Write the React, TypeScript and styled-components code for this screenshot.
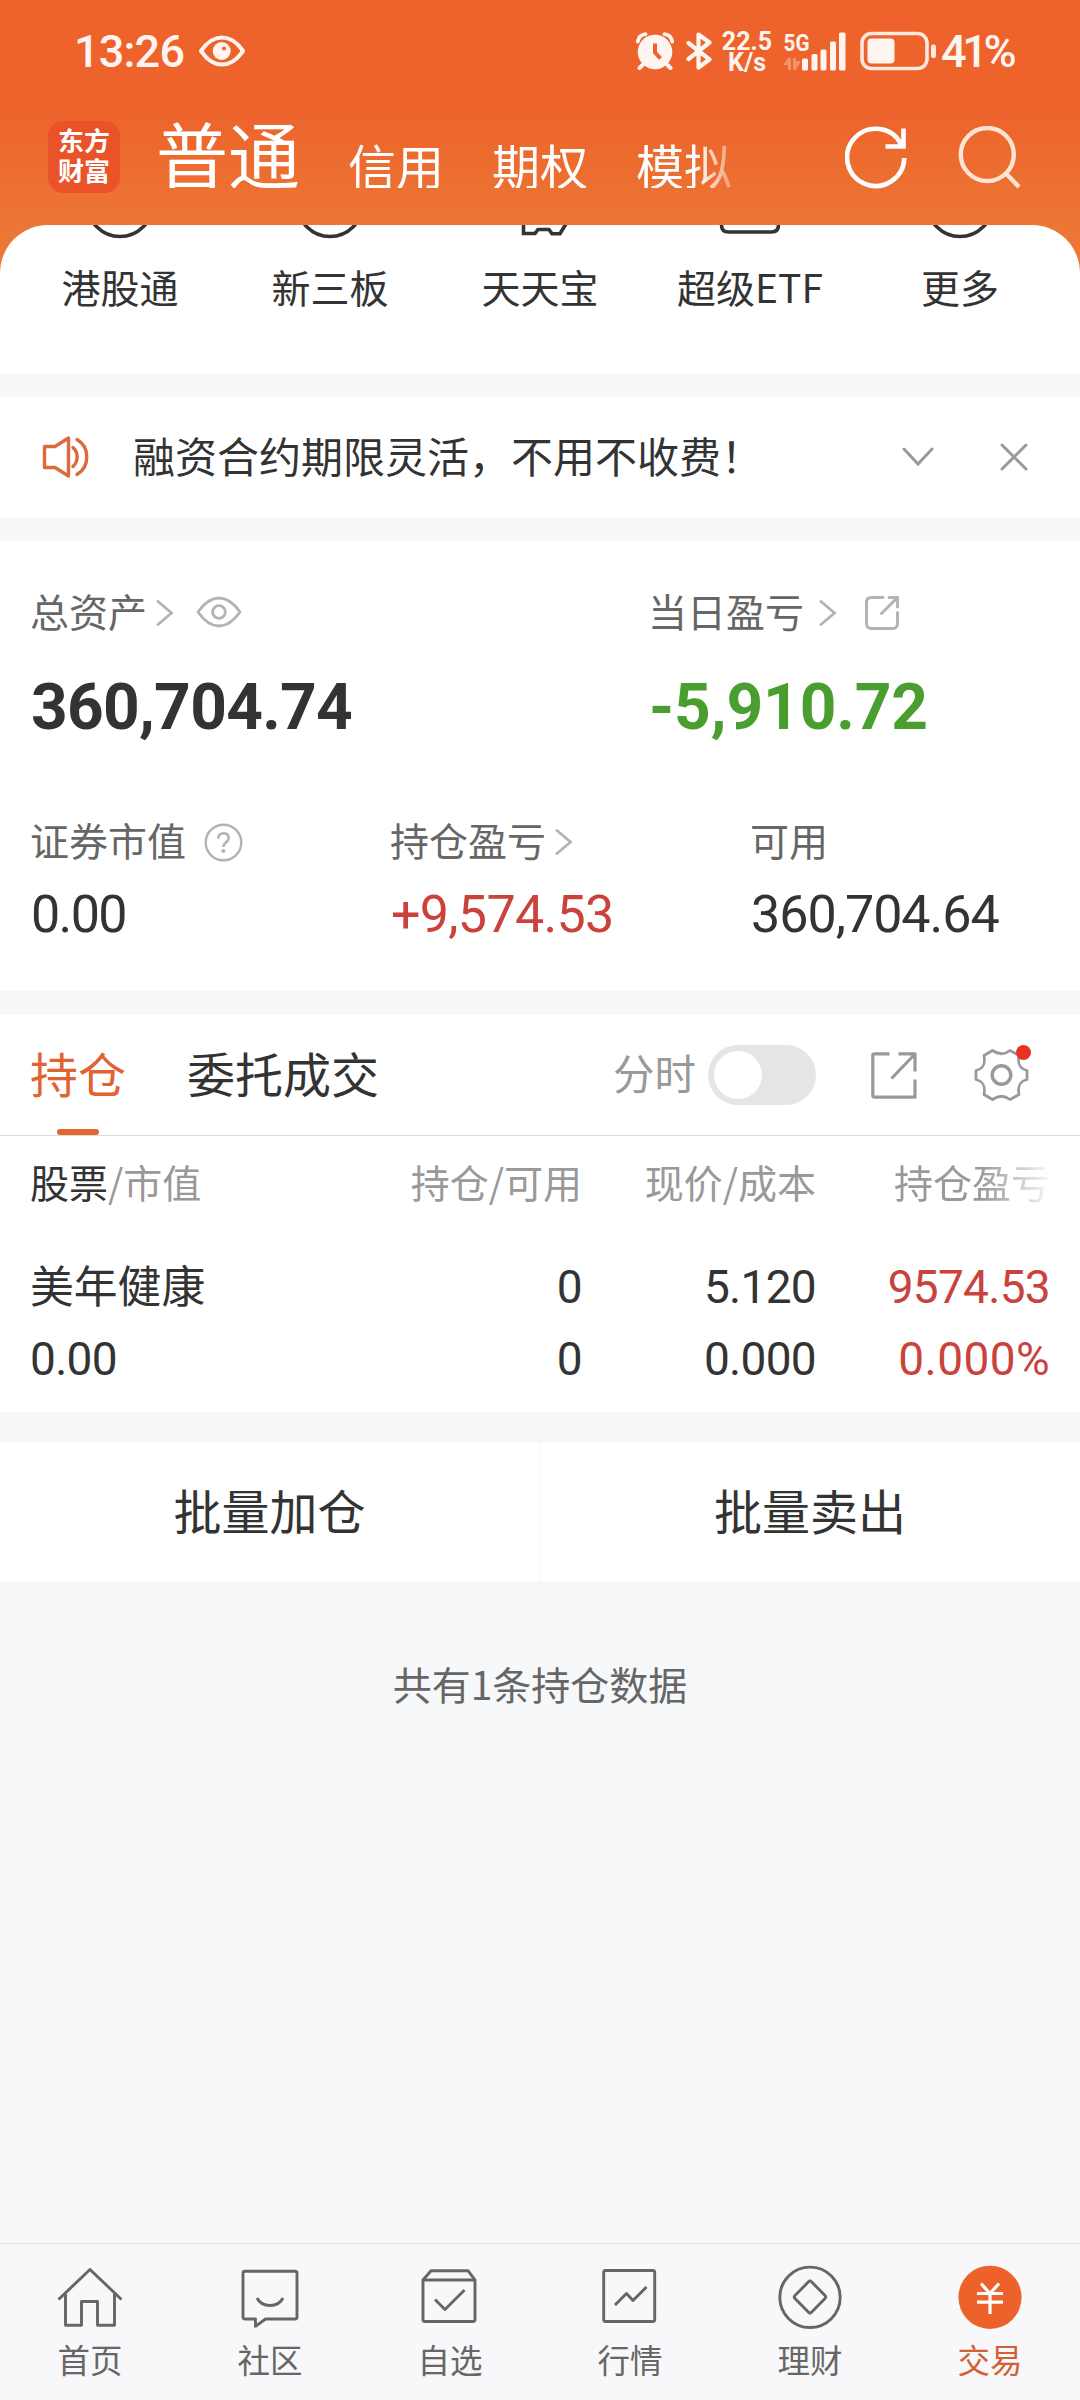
import React from 'react';
import styled, { createGlobalStyle, css } from 'styled-components';

const GlobalStyle = createGlobalStyle`
  * { box-sizing: border-box; }
  html, body { margin: 0; padding: 0; }
  body { width: 1080px; background: #f7f8fa; }
  svg { display: block; flex: none; }
`;

const cjk = css`
  font-family: 'Noto Sans CJK SC', 'Noto Sans', sans-serif;
  line-height: 1;
  padding-bottom: 0.112em;
  white-space: nowrap;
`;

const digits = css`
  font-family: Roboto, 'Noto Sans CJK SC', sans-serif;
  white-space: nowrap;
`;

const Page = styled.div`
  width: 1080px;
  height: 2400px;
  display: flex;
  flex-direction: column;
  background: linear-gradient(#ed632b 0, #ed632b 105px, #ec7635 225px, #ed7a36 290px, #f7f8fa 290px);
  overflow: hidden;
`;

/* ---------- status bar ---------- */

const StatusBar = styled.div`
  height: 105px;
  padding: 0 60px 3px 74px;
  display: flex;
  align-items: center;
  color: #fff5f0;
`;

const Clock = styled.span`
  ${digits}
  width: 125px;
  font-size: 45px;
  font-weight: 500;
  letter-spacing: -0.8px;
`;

const StatusIcons = styled.div`
  width: 384px;
  margin-left: auto;
  display: flex;
  align-items: center;
`;

const Speed = styled.div`
  ${digits}
  width: 52px;
  margin: 0 10px 0 9px;
  padding-top: 3px;
  text-align: center;
  font-size: 25px;
  line-height: 20.5px;
  font-weight: 700;
`;

const BatteryText = styled.span`
  ${digits}
  margin-left: 4px;
  font-size: 45px;
  font-weight: 500;
  letter-spacing: -4.3px;
`;

/* ---------- header ---------- */

const Header = styled.header`
  height: 120px;
  padding: 0 58px 0 48px;
  display: flex;
  align-items: flex-start;
`;

const Logo = styled.div`
  width: 72px;
  height: 72px;
  margin-top: 16px;
  padding: 4px 10px;
  border-radius: 15px;
  background: #ea5328;
  color: #fff;
  font: 700 26px/30px 'Noto Sans CJK SC', sans-serif;
  white-space: nowrap;
`;

const HeaderTabs = styled.nav`
  width: 585px;
  height: 72px;
  margin: 11px 0 0 36px;
  display: flex;
  align-items: flex-end;
  gap: 48px;
  mask-image: linear-gradient(90deg, #000 541px, transparent 592px);
`;

const HeaderTab = styled.span<{ $active?: boolean }>`
  font-family: 'Noto Sans CJK SC', sans-serif;
  font-size: ${(p) => (p.$active ? 72 : 48)}px;
  line-height: 1;
  color: #fff;
  white-space: nowrap;
`;

const HeaderActions = styled.div`
  margin: 21px 0 0 auto;
  display: flex;
  gap: 50px;
`;

/* ---------- sheet ---------- */

const Shortcuts = styled.section`
  height: 148px;
  padding: 0 15px;
  display: grid;
  grid-template-columns: repeat(5, 1fr);
  background: #fff;
  border-radius: 48px 48px 0 0;
`;

const Shortcut = styled.div`
  display: flex;
  flex-direction: column;
  align-items: center;
  gap: 26px;
`;

const ShortcutLabel = styled.span`
  ${cjk}
  font-size: 39px;
  color: #333;
`;

const Gap = styled.div<{ $h: number }>`
  flex: none;
  height: ${(p) => p.$h}px;
  background: #f7f8fa;
`;

const Notice = styled.section`
  height: 120px;
  padding: 0 52px 0 42px;
  display: flex;
  align-items: center;
  background: #fff;
`;

const NoticeText = styled.span`
  ${cjk}
  flex: 1;
  margin-left: 43px;
  font-size: 42px;
  color: #333;
`;

const NoticeActions = styled.div`
  display: flex;
  align-items: center;
  gap: 66px;
`;

/* ---------- assets ---------- */

const Assets = styled.section`
  height: 450px;
  padding-top: 42px;
  background: #fff;
`;

const AssetRow = styled.div<{ $cols: string }>`
  padding-left: 30px;
  display: grid;
  grid-template-columns: ${(p) => p.$cols};
`;

const Metrics = styled(AssetRow)`
  margin-top: 64px;
`;

const LabelRow = styled.div`
  height: 60px;
  display: flex;
  align-items: center;
`;

const Label = styled.span`
  ${cjk}
  font-size: 39px;
  color: #666;
`;

const IconSlot = styled.span<{ $left: number }>`
  margin-left: ${(p) => p.$left}px;
`;

const Total = styled.div<{ $color: string; $spacing: number }>`
  ${digits}
  margin: 25px 0 0 1px;
  height: 80px;
  line-height: 80px;
  font-size: 64px;
  font-weight: 700;
  letter-spacing: ${(p) => p.$spacing}px;
  color: ${(p) => p.$color};
`;

const Metric = styled.div<{ $color: string; $spacing: number }>`
  ${digits}
  margin: 13px 0 0 1px;
  height: 60px;
  line-height: 60px;
  font-size: 52px;
  letter-spacing: ${(p) => p.$spacing}px;
  color: ${(p) => p.$color};
`;

/* ---------- positions ---------- */

const PositionBar = styled.div`
  height: 121px;
  padding: 0 51px 0 30px;
  display: flex;
  align-items: center;
  background: #fff;
  border-bottom: 1px solid #dedede;
`;

const PositionTab = styled.div<{ $active?: boolean }>`
  position: relative;
  height: 120px;
  margin-right: 61px;
  display: flex;
  align-items: center;
  color: ${(p) => (p.$active ? '#e06331' : '#333')};
  ${(p) =>
    p.$active &&
    css`
      &::after {
        content: '';
        position: absolute;
        left: 27px;
        bottom: 0;
        width: 42px;
        height: 6px;
        border-radius: 3px;
        background: #e16632;
      }
    `}
`;

const PositionTabText = styled.span`
  ${cjk}
  font-size: 48px;
`;

const BarTools = styled.div`
  margin-left: auto;
  display: flex;
  align-items: center;
`;

const ToolLabel = styled.span`
  ${cjk}
  font-size: 41.5px;
  color: #999;
`;

const Toggle = styled.span`
  width: 108px;
  height: 60px;
  margin: 0 55px 0 12px;
  padding: 6px;
  border-radius: 30px;
  background: #e5e5e7;
  &::before {
    content: '';
    display: block;
    width: 48px;
    height: 48px;
    border-radius: 50%;
    background: #fff;
  }
`;

const GearWrap = styled.span`
  position: relative;
  margin-left: 57px;
`;

const RedDot = styled.i`
  position: absolute;
  right: -2px;
  top: -3px;
  width: 15px;
  height: 15px;
  border-radius: 50%;
  background: #e83323;
`;

const Grid = styled.div`
  padding: 0 30px;
  display: grid;
  grid-template-columns: 270px 282px 234px 234px;
  background: #fff;
`;

const HeadRow = styled(Grid)`
  height: 96px;
  align-items: center;
`;

const HeadCell = styled.span<{ $fade?: boolean }>`
  ${cjk}
  font-size: 39px;
  color: #999;
  text-align: right;
  &:first-child { text-align: left; }
  b { font-weight: 400; color: #333; }
  ${(p) => p.$fade && 'mask-image: linear-gradient(90deg, #000 165px, transparent 240px);'}
`;

const StockRow = styled(Grid)`
  height: 180px;
  padding-top: 19px;
  align-items: start;
`;

const Cell = styled.div<{ $color?: string }>`
  ${digits}
  font-size: 46px;
  line-height: 72px;
  letter-spacing: -0.7px;
  text-align: right;
  color: ${(p) => p.$color ?? '#333'};
  &:first-child { text-align: left; }
`;

const Rate = styled.span`
  letter-spacing: 0.4px;
`;

const StockName = styled.div`
  height: 72px;
  display: flex;
  align-items: center;
  letter-spacing: 0;
  span { ${cjk} font-size: 43.8px; }
`;

const Batch = styled.section`
  height: 138px;
  display: grid;
  grid-template-columns: 539px 541px;
  background: #fff;
`;

const BatchButton = styled.div`
  display: flex;
  align-items: center;
  justify-content: center;
  color: #333;
  & + & { border-left: 1px solid #f5f6f8; }
  span { ${cjk} font-size: 48px; }
`;

const Footnote = styled.div`
  flex: 1;
  padding-top: 83px;
  text-align: center;
  background: #f7f8fa;
  span { ${cjk} display: inline-block; font-size: 39px; color: #666; }
`;

/* ---------- bottom nav ---------- */

const BottomNav = styled.nav`
  height: 157px;
  display: grid;
  grid-template-columns: repeat(6, 1fr);
  background: #f8f8fa;
  border-top: 1px solid #e0e1e3;
`;

const NavItem = styled.div<{ $active?: boolean }>`
  padding-top: 21px;
  display: flex;
  flex-direction: column;
  align-items: center;
  gap: 14px;
  color: ${(p) => (p.$active ? '#d26233' : '#666')};
  span { ${cjk} font-size: 32.5px; }
`;

/* ---------- icons ---------- */

const Chevron = () => (
  <svg width="18" height="26" viewBox="0 0 18 26" fill="none" stroke="#b3b3b3" strokeWidth="2.8">
    <path d="M2 1.5 L15.5 13 L2 24.5" strokeLinecap="round" />
  </svg>
);

const StatusEye = () => (
  <svg width="46" height="32" viewBox="0 0 46 32" fill="none">
    <path d="M2 16 C9 6 15 2.5 23 2.5 S37 6 44 16 C37 26 31 29.500 23 29.500 S9 26 2 16Z" stroke="#fff5f0" strokeWidth="4" strokeLinejoin="round" />
    <circle cx="22.700" cy="16" r="9" fill="#fff5f0" />
    <circle cx="25" cy="13.500" r="2" fill="#ed632b" />
  </svg>
);

const Alarm = () => (
  <svg width="38" height="38" viewBox="0 0 38 38" fill="none" stroke="#fff5f0">
    <circle cx="19" cy="20" r="17.300" fill="#fff5f0" stroke="none" />
    <path d="M1.800 9.500 A9 9 0 0 1 9.500 2.200 M28.500 2.200 A9 9 0 0 1 36.200 9.500" strokeWidth="3.800" strokeLinecap="round" />
    <path d="M6.500 33 L3.500 36 M31.500 33 L34.500 36" strokeWidth="4" strokeLinecap="round" />
    <path d="M19 11.500 V20.500 L24.500 26.500" stroke="#ed632b" strokeWidth="4" />
  </svg>
);

const Bluetooth = () => (
  <svg width="26" height="38" viewBox="0 0 26 38" fill="none" stroke="#fff5f0" strokeWidth="4.2" strokeLinejoin="round" strokeLinecap="round">
    <path d="M2.500 11 L23.500 27.500 L12.500 35.500 V2.500 L23.500 10.500 L2.500 27" />
  </svg>
);

const Signal = () => (
  <svg width="63" height="40" viewBox="0 0 63 40" overflow="visible">
    <text x="0.500" y="20" fontFamily="Roboto, sans-serif" fontWeight="700" fontSize="24.500" textLength="26" lengthAdjust="spacingAndGlyphs" fill="#fff5f0">5G</text>
    <path d="M0 34 L5 27 H8 V39 H5 V34Z M10 27 H13 V30 H18 L13 39 H10Z" fill="#f3926a" />
    <g fill="#fff5f0">
      <rect x="19" y="27.500" width="6" height="12" rx="1.500" />
      <rect x="28.500" y="23" width="6" height="16.500" rx="1.500" />
      <rect x="37.500" y="18.500" width="6" height="21" rx="1.500" />
      <rect x="47" y="10.500" width="6" height="29" rx="1.500" />
      <rect x="56" y="1.500" width="6.500" height="38" rx="1.500" />
    </g>
  </svg>
);

const Battery = () => (
  <svg width="77" height="40" viewBox="0 0 77 40">
    <rect x="2" y="2.500" width="65" height="35" rx="9.500" fill="none" stroke="#ffe9de" strokeWidth="3.600" />
    <rect x="7.500" y="7.500" width="27" height="25" rx="4" fill="#fff5f0" />
    <rect x="71" y="13.500" width="5" height="13.500" rx="2" fill="#ffe9de" />
  </svg>
);

const Refresh = () => (
  <svg width="63" height="64" viewBox="0 0 63 64" fill="none" stroke="#fff" strokeWidth="4.600">
    <path d="M59.300 32 A28.600 28.600 0 1 1 56.500 19" />
    <path d="M58.500 2.500 V20.500 H40.500" />
  </svg>
);

const Search = () => (
  <svg width="64" height="64" viewBox="0 0 64 64" fill="none" stroke="#ffe3d3" strokeWidth="4.400">
    <circle cx="29.300" cy="28.500" r="26.500" />
    <path d="M48 47.500 L61 61" />
  </svg>
);

const shortcutArt: Record<string, React.ReactNode> = {
  ring: <circle cx="35" cy="-21" r="32.500" />,
  coin: <path d="M18.500 -4 V8.500 H30 L33 4.500 H44 L47 8.800 H55 L61.500 -2" />,
  card: <path d="M6.500 -10 V0 Q6.500 7 13.500 7 H56.500 Q63.500 7 63.500 0 V-10" />,
};

const ShortcutIcon = ({ kind }: { kind: string }) => (
  <svg width="70" height="16" viewBox="0 0 70 16" fill="none" stroke="#333" strokeWidth="3.600">
    {shortcutArt[kind]}
  </svg>
);

const Speaker = () => (
  <svg width="48" height="44" viewBox="0 0 48 44" fill="none" stroke="#d96b3c" strokeWidth="3.400" strokeLinejoin="round" strokeLinecap="round">
    <path d="M2.500 11.500 H13 L26.500 3 V41 L13 32.500 H2.500Z" />
    <path d="M31 12.500 A13 13 0 0 1 31 31.500" />
    <path d="M35 4.500 C48 12 48 32 35 39.500" />
  </svg>
);

const Eye = () => (
  <svg width="46" height="34" viewBox="0 0 46 34" fill="none" stroke="#b3b3b3" strokeWidth="2.800">
    <path d="M2 16 C9 6 15 2 23 2 S37 6 44 16 C37 26 31 30 23 30 S9 26 2 16Z" strokeLinejoin="round" />
    <circle cx="23" cy="16" r="6.300" />
  </svg>
);

const ShareSmall = () => (
  <svg width="34" height="34" viewBox="0 0 34 34" fill="none" stroke="#b3b3b3" strokeWidth="2.900">
    <path d="M18 1.500 H6.500 Q1.500 1.500 1.500 6.500 V27.500 Q1.500 32.500 6.500 32.500 H27.500 Q32.500 32.500 32.500 27.500 V16.500" strokeLinecap="round" />
    <path d="M24 1.500 H32.500 V11 M32 2 L16.500 17.500" strokeLinecap="round" />
  </svg>
);

const Help = () => (
  <svg width="39" height="39" viewBox="0 0 39 39" fill="none" stroke="#b3b3b3">
    <circle cx="19.500" cy="19.500" r="17.800" strokeWidth="2.400" />
    <path d="M14.300 15.500 C14.300 8.500 24.700 8.500 24.700 15 C24.700 19 19.300 19.500 19.300 24" strokeWidth="2.600" />
    <circle cx="19.300" cy="28" r="2" fill="#b3b3b3" stroke="none" />
  </svg>
);

const Share = () => (
  <svg width="46" height="47" viewBox="0 0 46 47" fill="none" stroke="#999" strokeWidth="3.200" strokeLinejoin="round">
    <path d="M18.500 1.800 H3.500 Q1.800 1.800 1.800 3.500 V43.500 Q1.800 45.200 3.500 45.200 H44 V27.500" />
    <path d="M27.500 1.800 H44 V19.500 M43.500 2.500 L20.500 26.500" />
  </svg>
);

const Gear = () => (
  <svg width="55" height="54" viewBox="0 0 55 54" fill="none" stroke="#999" strokeLinejoin="round">
    <path
      strokeWidth="2.800"
      d="M18.500 2.500 Q27.500 9 36 2.500 L45 7.500 C43.500 15.500 45 20.500 53 22.500 V31.500 C45 33.500 43.500 38.500 45 46.500 L36 51.500 Q27.500 45 18.500 51.500 L10 46.500 C11.500 38.500 10 33.500 2 31.500 V22.500 C10 20.500 11.500 15.500 10 7.500Z"
    />
    <circle cx="27.500" cy="27" r="9.300" strokeWidth="3.400" />
  </svg>
);

const navArt: Record<string, React.ReactNode> = {
  home: (
    <>
      <path d="M1.500 34.500 L33 4.500 L64.500 34.500" />
      <path d="M8.500 29 V60.300 H24.500 V36.500 H40.500 V60.300 H57.500 V29" />
    </>
  ),
  chat: (
    <>
      <path d="M8 6.300 H58 Q60 6.300 60 8.300 V52 Q60 54 58 54 H28.500 L18.500 61.300 V54 H8 Q6 54 6 52 V8.300 Q6 6.300 8 6.300Z" />
      <path d="M20 33 C25 43 41 43 46 33" />
    </>
  ),
  pick: (
    <>
      <path d="M6 15 H58 V54.500 Q58 56.500 56 56.500 H8 Q6 56.500 6 54.500Z" />
      <path d="M6 15 L14 5.700 H51 L58 15" />
      <path d="M18 34.500 L28 44.500 L47.500 25" />
    </>
  ),
  chart: (
    <>
      <rect x="6.700" y="5.500" width="51" height="51" rx="2" />
      <path d="M18 40 L29.500 28.500 L36 35.500 L49.500 22" />
    </>
  ),
  wealth: (
    <>
      <circle cx="33" cy="32.300" r="30.200" />
      <path d="M31.500 16.800 Q33 15.300 34.500 16.800 L48 30.500 Q49.500 32 48 33.500 L34.500 47.200 Q33 48.700 31.500 47.200 L18 33.500 Q16.500 32 18 30.500Z" />
    </>
  ),
  trade: (
    <>
      <circle cx="33" cy="32.300" r="31.600" fill="#ed622b" stroke="none" />
      <path d="M24 18.500 L33 28.500 L42 18.500 M20 28.500 H46 M20 37.200 H46 M33 28 V49" stroke="#fff" strokeWidth="3.200" />
    </>
  ),
};

const NavIcon = ({ kind }: { kind: string }) => (
  <svg width="66" height="64" viewBox="0 0 66 64" fill="none" stroke="#666" strokeWidth="2.900" strokeLinejoin="round">
    {navArt[kind]}
  </svg>
);

/* ---------- data ---------- */

const shortcuts = [
  { label: '港股通', kind: 'ring' },
  { label: '新三板', kind: 'ring' },
  { label: '天天宝', kind: 'coin' },
  { label: '超级ETF', kind: 'card' },
  { label: '更多', kind: 'ring' },
];

const navItems = [
  { label: '首页', kind: 'home' },
  { label: '社区', kind: 'chat' },
  { label: '自选', kind: 'pick' },
  { label: '行情', kind: 'chart' },
  { label: '理财', kind: 'wealth' },
  { label: '交易', kind: 'trade' },
];

export default function App() {
  return (
    <>
      <GlobalStyle />
      <Page>
        <StatusBar>
          <Clock>13:26</Clock>
          <StatusEye />
          <StatusIcons>
            <Alarm />
            <IconSlot $left={12}><Bluetooth /></IconSlot>
            <Speed>22.5<br />K/s</Speed>
            <Signal />
            <IconSlot $left={14}><Battery /></IconSlot>
            <BatteryText>41%</BatteryText>
          </StatusIcons>
        </StatusBar>
        <Header>
          <Logo>东方<br />财富</Logo>
          <HeaderTabs>
            <HeaderTab $active>普通</HeaderTab>
            <HeaderTab>信用</HeaderTab>
            <HeaderTab>期权</HeaderTab>
            <HeaderTab>模拟</HeaderTab>
          </HeaderTabs>
          <HeaderActions>
            <Refresh />
            <Search />
          </HeaderActions>
        </Header>

        <Shortcuts>
          {shortcuts.map((s) => (
            <Shortcut key={s.label}>
              <ShortcutIcon kind={s.kind} />
              <ShortcutLabel>{s.label}</ShortcutLabel>
            </Shortcut>
          ))}
        </Shortcuts>
        <Gap $h={24} />
        <Notice>
          <Speaker />
          <NoticeText>融资合约期限灵活，不用不收费！</NoticeText>
          <NoticeActions>
            <svg width="32" height="20" viewBox="0 0 32 20" fill="none" stroke="#999" strokeWidth="3" strokeLinecap="round">
              <path d="M2 2 L16 17 L30 2" />
            </svg>
            <svg width="28" height="28" viewBox="0 0 28 28" fill="none" stroke="#999" strokeWidth="3" strokeLinecap="round">
              <path d="M2 2 L26 26 M26 2 L2 26" />
            </svg>
          </NoticeActions>
        </Notice>
        <Gap $h={24} />

        <Assets>
          <AssetRow $cols="618px 1fr">
            <div>
              <LabelRow>
                <Label>总资产</Label>
                <IconSlot $left={9}><Chevron /></IconSlot>
                <IconSlot $left={22}><Eye /></IconSlot>
              </LabelRow>
              <Total $color="#333" $spacing={-0.7}>360,704.74</Total>
            </div>
            <div>
              <LabelRow>
                <Label>当日盈亏</Label>
                <IconSlot $left={15}><Chevron /></IconSlot>
                <IconSlot $left={28}><ShareSmall /></IconSlot>
              </LabelRow>
              <Total $color="#4a9e2f" $spacing={-0.1}>-5,910.72</Total>
            </div>
          </AssetRow>
          <Metrics $cols="360px 360px 1fr">
            <div>
              <LabelRow>
                <Label>证券市值</Label>
                <IconSlot $left={18}><Help /></IconSlot>
              </LabelRow>
              <Metric $color="#333" $spacing={-1.6}>0.00</Metric>
            </div>
            <div>
              <LabelRow>
                <Label>持仓盈亏</Label>
                <IconSlot $left={9}><Chevron /></IconSlot>
              </LabelRow>
              <Metric $color="#c9433c" $spacing={-0.7}>+9,574.53</Metric>
            </div>
            <div>
              <LabelRow>
                <Label>可用</Label>
              </LabelRow>
              <Metric $color="#333" $spacing={-1}>360,704.64</Metric>
            </div>
          </Metrics>
        </Assets>
        <Gap $h={24} />

        <PositionBar>
          <PositionTab $active><PositionTabText>持仓</PositionTabText></PositionTab>
          <PositionTab><PositionTabText>委托成交</PositionTabText></PositionTab>
          <BarTools>
            <ToolLabel>分时</ToolLabel>
            <Toggle />
            <Share />
            <GearWrap>
              <Gear />
              <RedDot />
            </GearWrap>
          </BarTools>
        </PositionBar>
        <HeadRow>
          <HeadCell><b>股票</b>/市值</HeadCell>
          <HeadCell>持仓/可用</HeadCell>
          <HeadCell>现价/成本</HeadCell>
          <HeadCell $fade>持仓盈亏</HeadCell>
        </HeadRow>
        <StockRow>
          <Cell>
            <StockName><span>美年健康</span></StockName>
            0.00
          </Cell>
          <Cell>0<br />0</Cell>
          <Cell>5.120<br />0.000</Cell>
          <Cell $color="#c9433c">9574.53<br /><Rate>0.000%</Rate></Cell>
        </StockRow>
        <Gap $h={31} />
        <Batch>
          <BatchButton><span>批量加仓</span></BatchButton>
          <BatchButton><span>批量卖出</span></BatchButton>
        </Batch>
        <Footnote><span>共有1条持仓数据</span></Footnote>

        <BottomNav>
          {navItems.map((n) => (
            <NavItem key={n.kind} $active={n.kind === 'trade'}>
              <NavIcon kind={n.kind} />
              <span>{n.label}</span>
            </NavItem>
          ))}
        </BottomNav>
      </Page>
    </>
  );
}
